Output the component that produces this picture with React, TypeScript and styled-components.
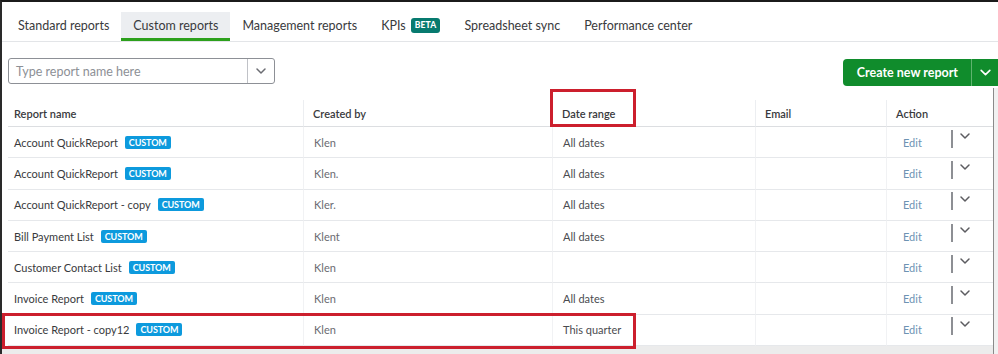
import styled, { createGlobalStyle } from "styled-components";

const GlobalStyle = createGlobalStyle`
  html, body {
    margin: 0;
    padding: 0;
    background: #ffffff;
  }
  body {
    font-family: Lato, "Open Sans", Arial, sans-serif;
    color: #393a3d;
  }
`;

interface ReportRow {
  name: string;
  createdBy: string;
  dateRange: string;
}

const rows: ReportRow[] = [
  { name: "Account QuickReport", createdBy: "Klen", dateRange: "All dates" },
  { name: "Account QuickReport", createdBy: "Klen.", dateRange: "All dates" },
  { name: "Account QuickReport - copy", createdBy: "Kler.", dateRange: "All dates" },
  { name: "Bill Payment List", createdBy: "Klent", dateRange: "All dates" },
  { name: "Customer Contact List", createdBy: "Klen", dateRange: "" },
  { name: "Invoice Report", createdBy: "Klen", dateRange: "All dates" },
  { name: "Invoice Report - copy12", createdBy: "Klen", dateRange: "This quarter" },
];

const tabs = [
  "Standard reports",
  "Custom reports",
  "Management reports",
  "KPIs",
  "Spreadsheet sync",
  "Performance center",
];

const Chevron = ({ size = 12, color = "#393a3d" }: { size?: number; color?: string }) => (
  <svg width={size} height={size} viewBox="0 0 12 12" fill="none">
    <path d="M2 4l4 4 4-4" stroke={color} strokeWidth="1.5" strokeLinecap="round" strokeLinejoin="round" />
  </svg>
);

const App = () => {
  return (
    <>
      <GlobalStyle />
      <Frame>
        <TabBar>
          {tabs.map((tab) => (
            <Tab key={tab} $active={tab === "Custom reports"}>
              {tab}
              {tab === "KPIs" && <Beta>BETA</Beta>}
            </Tab>
          ))}
        </TabBar>
        <Body>
          <Content>
            <Toolbar>
              <Search>
                <SearchInput>Type report name here</SearchInput>
                <SearchToggle>
                  <Chevron size={12} color="#6b6c72" />
                </SearchToggle>
              </Search>
              <CreateButton>
                <CreateLabel>Create new report</CreateLabel>
                <CreateToggle>
                  <Chevron size={13} color="#ffffff" />
                </CreateToggle>
              </CreateButton>
            </Toolbar>
            <Table>
              <HeaderCell $first>Report name</HeaderCell>
              <HeaderCell>Created by</HeaderCell>
              <HeaderCell>Date range</HeaderCell>
              <HeaderCell>Email</HeaderCell>
              <HeaderCell>Action</HeaderCell>
              {rows.map((row, index) => (
                <Row key={index}>
                  <NameCell>
                    {row.name}
                    <Badge>CUSTOM</Badge>
                  </NameCell>
                  <Cell $muted>{row.createdBy}</Cell>
                  <Cell>{row.dateRange}</Cell>
                  <Cell />
                  <ActionCell>
                    <EditLink>Edit</EditLink>
                    <ActionBar />
                    <ActionToggle>
                      <Chevron size={12} color="#5c5c60" />
                    </ActionToggle>
                  </ActionCell>
                </Row>
              ))}
            </Table>
            <Footer />
            <DateRangeMark />
            <LastRowMark />
          </Content>
          <Scrollbar />
        </Body>
      </Frame>
    </>
  );
};

export default App;

const Frame = styled.div`
  height: 354px;
  box-sizing: border-box;
  border-top: 2px solid #1b1b1b;
  border-left: 2px solid #2a2a2a;
  display: flex;
  flex-direction: column;
  overflow: hidden;
`;

const TabBar = styled.div`
  display: flex;
  align-items: stretch;
  height: 29px;
  padding: 10px 0 0 4px;
  border-bottom: 1px solid #e3e5e8;
  box-sizing: content-box;
`;

const Tab = styled.div<{ $active?: boolean }>`
  display: flex;
  align-items: center;
  gap: 5px;
  padding: 0 12px;
  font-size: 12.5px;
  color: #393a3d;
  background: ${({ $active }) => ($active ? "#eceef1" : "transparent")};
  border-bottom: 3px solid ${({ $active }) => ($active ? "#2ca01c" : "transparent")};
  box-sizing: border-box;
  white-space: nowrap;
`;

const Beta = styled.span`
  background: #077a6f;
  color: #ffffff;
  font-size: 8.5px;
  font-weight: 900;
  letter-spacing: 0.2px;
  padding: 2px 4px;
  border-radius: 3px;
  line-height: 11px;
`;

const Body = styled.div`
  flex: 1;
  display: flex;
  min-height: 0;
`;

const Content = styled.div`
  flex: 1;
  position: relative;
  display: flex;
  flex-direction: column;
  padding-left: 6px;
`;

const Scrollbar = styled.div`
  width: 4px;
  margin-top: 46px;
  border-left: 1px solid #8a8a8a;
  background: #f1f1f1;
`;

const Toolbar = styled.div`
  display: flex;
  justify-content: space-between;
  align-items: flex-start;
  padding-top: 16px;
  height: 58px;
  box-sizing: border-box;
  margin-right: -5px;
`;

const Search = styled.div`
  width: 267px;
  height: 26px;
  display: flex;
  border: 1px solid #8d9096;
  border-radius: 3px;
  box-sizing: border-box;
  background: #ffffff;
`;

const SearchInput = styled.div`
  flex: 1;
  display: flex;
  align-items: center;
  padding-left: 7px;
  font-size: 12.5px;
  color: #8d9096;
`;

const SearchToggle = styled.div`
  width: 26px;
  display: flex;
  align-items: center;
  justify-content: center;
  border-left: 1px solid #c0c2c7;
`;

const CreateButton = styled.div`
  display: flex;
  height: 27px;
  margin-top: 1px;
  background: #108c2c;
  border-radius: 4px 0 0 4px;
  color: #ffffff;
`;

const CreateLabel = styled.div`
  display: flex;
  align-items: center;
  padding: 0 13px 0 14px;
  font-size: 12.5px;
  font-weight: 700;
`;

const CreateToggle = styled.div`
  width: 26px;
  display: flex;
  align-items: center;
  justify-content: center;
  border-left: 1px solid #5fb36f;
`;

const Table = styled.div`
  display: grid;
  grid-template-columns: 295px 249px 203px 131px 1fr;
  grid-template-rows: 27px;
  grid-auto-rows: 31.3px;
  font-size: 11px;
`;

const HeaderCell = styled.div<{ $first?: boolean }>`
  display: flex;
  align-items: center;
  padding-left: ${({ $first }) => ($first ? "6px" : "9px")};
  border-left: ${({ $first }) => ($first ? "none" : "1px solid #eceef1")};
  border-bottom: 1px solid #dcdee1;
  color: #393a3d;
  font-weight: 600;
`;

const Row = styled.div`
  display: contents;
`;

const Cell = styled.div<{ $muted?: boolean }>`
  display: flex;
  align-items: center;
  padding-left: 10px;
  border-left: 1px solid #f1f2f4;
  border-bottom: 1px solid #e6e8eb;
  color: ${({ $muted }) => ($muted ? "#6b6c72" : "#4a4b50")};
  white-space: nowrap;
`;

const NameCell = styled(Cell)`
  padding-left: 6px;
  border-left: none;
  gap: 7px;
  color: #393a3d;
`;

const Badge = styled.span`
  background: #0d9add;
  color: #ffffff;
  font-size: 9px;
  font-weight: 700;
  padding: 0 4px;
  border-radius: 2px;
  line-height: 13px;
  letter-spacing: -0.1px;
`;

const ActionCell = styled(Cell)`
  padding-left: 16px;
  align-items: center;
`;

const EditLink = styled.span`
  color: #6d93b3;
  font-size: 11px;
  width: 32px;
`;

const ActionBar = styled.span`
  width: 2px;
  height: 18px;
  background: #8d8f94;
  margin: -7px 0 0 16px;
`;

const ActionToggle = styled.span`
  display: flex;
  margin: -12px 0 0 6px;
`;

const Footer = styled.div`
  flex: 1;
  background: #ececec;
  margin-left: -6px;
`;

const DateRangeMark = styled.div`
  position: absolute;
  left: 548px;
  top: 47px;
  width: 86px;
  height: 38px;
  border: 3px solid #cc1f2d;
  box-sizing: border-box;
  pointer-events: none;
`;

const LastRowMark = styled.div`
  position: absolute;
  left: 0;
  top: 271px;
  width: 634px;
  height: 36px;
  border: 3px solid #cc1f2d;
  box-sizing: border-box;
  pointer-events: none;
`;
